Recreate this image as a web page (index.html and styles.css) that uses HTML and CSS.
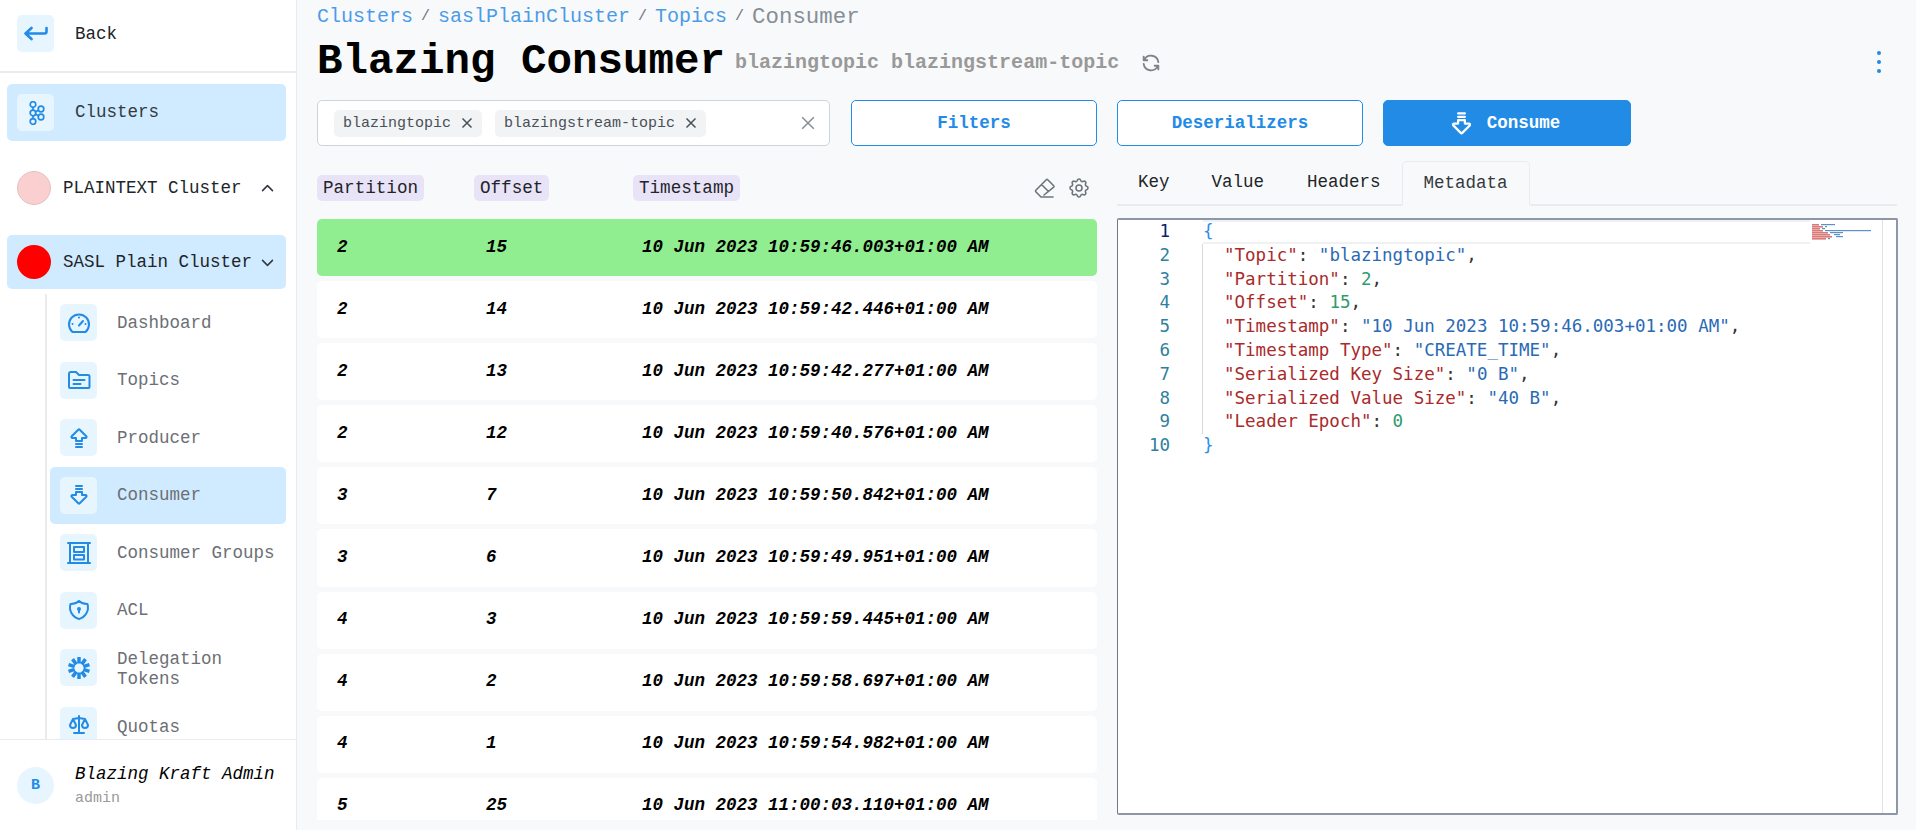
FILE: index.html
```html
<!DOCTYPE html>
<html lang="en">
<head>
<meta charset="utf-8">
<title>Blazing Consumer</title>
<link rel="stylesheet" href="styles.css">
</head>
<body>
<aside class="sidebar">
  <div class="back-row">
    <span class="tile"><svg class="ic ic-back" viewBox="0 0 24 24"><path d="M22.500 7v3.500a2 2 0 0 1-2 2H1.500M7.500 7l-6 5.500 6 5.500"/></svg></span>
    <span class="lbl-dark">Back</span>
  </div>
  <div class="clusters-row">
    <span class="tile"><svg class="ic thin" viewBox="0 0 24 24"><circle cx="9" cy="3.500" r="2.800"/><circle cx="9" cy="12" r="2.800"/><circle cx="9" cy="20.500" r="2.800"/><circle cx="17" cy="8" r="2.800"/><circle cx="17" cy="16" r="2.800"/><path d="M9 6.300v2.900M9 14.800v2.900M11.500 10.800l3-1.500M11.500 13.200l3 1.500"/></svg></span>
    <span class="lbl-dark lbl-up">Clusters</span>
  </div>
  <div class="cluster-row cluster-first">
    <span class="dot dot-pale"></span>
    <span class="cluster-name">PLAINTEXT Cluster</span>
    <svg class="chev" viewBox="0 0 24 24"><path d="M5 15l7-7 7 7"/></svg>
  </div>
  <div class="cluster-row cluster-active">
    <span class="dot dot-red"></span>
    <span class="cluster-name">SASL Plain Cluster</span>
    <svg class="chev" viewBox="0 0 24 24"><path d="M5 9l7 7 7-7"/></svg>
  </div>
  <nav class="nav">
    <div class="nav-item">
      <span class="tile"><svg class="ic" viewBox="0 0 24 24"><path d="M5.500 21h13a10 10 0 1 0-13 0z"/><path d="M12 14.500l4-4.500M5.500 13h.01M12 6.500h.01M18.500 13h.01"/></svg></span>
      <span class="lbl">Dashboard</span>
    </div>
    <div class="nav-item">
      <span class="tile"><svg class="ic" viewBox="0 0 24 24"><path d="M2 6a2 2 0 0 1 2-2h5l3 3h9a1.500 1.500 0 0 1 1.500 1.500V19a1 1 0 0 1-1 1H3a1 1 0 0 1-1-1z"/><path d="M6.500 12h11M6.500 16h7"/></svg></span>
      <span class="lbl">Topics</span>
    </div>
    <div class="nav-item">
      <span class="tile"><svg class="ic" viewBox="0 0 24 24"><path d="M9 12h-3.586a1 1 0 0 1-.707-1.707l6.586-6.586a1 1 0 0 1 1.414 0l6.586 6.586a1 1 0 0 1-.707 1.707h-3.586v3h-6v-3zM9 21h6M9 18h6"/></svg></span>
      <span class="lbl">Producer</span>
    </div>
    <div class="nav-item nav-active">
      <span class="tile"><svg class="ic" viewBox="0 0 24 24"><path d="M15 12h3.586a1 1 0 0 1 .707 1.707l-6.586 6.586a1 1 0 0 1-1.414 0l-6.586-6.586a1 1 0 0 1 .707-1.707h3.586v-3h6v3zM15 3h-6M15 6h-6"/></svg></span>
      <span class="lbl">Consumer</span>
    </div>
    <div class="nav-item">
      <span class="tile"><svg class="ic" viewBox="0 0 24 24"><path d="M1 2h22M3 2v20M21 2v20M1 22h22"/><rect x="7" y="6" width="10" height="5"/><rect x="7" y="14" width="10" height="4.500"/></svg></span>
      <span class="lbl">Consumer Groups</span>
    </div>
    <div class="nav-item">
      <span class="tile"><svg class="ic" viewBox="0 0 24 24"><path d="M12 3a12 12 0 0 0 8.500 3a12 12 0 0 1-8.500 15a12 12 0 0 1-8.500-15a12 12 0 0 0 8.500-3"/><circle cx="12" cy="11" r="1"/><path d="M12 12v2.500"/></svg></span>
      <span class="lbl">ACL</span>
    </div>
    <div class="nav-item">
      <span class="tile"><svg class="ic spokes" viewBox="0 0 24 24"><path d="M12 7.500V1M12 16.500V23M14.650 8.360L18.470 3.100M9.350 15.640L5.530 20.900M9.350 8.360L5.530 3.100M14.650 15.640L18.470 20.900M16.280 10.610L22.460 8.600M7.720 13.390L1.540 15.400M7.720 10.610L1.540 8.600M16.280 13.390L22.460 15.400"/></svg></span>
      <span class="lbl lbl-wrap">Delegation Tokens</span>
    </div>
    <div class="nav-item">
      <span class="tile"><svg class="ic" viewBox="0 0 24 24"><path d="M7 20h10M6 6l6-1 6 1M12 3v17M9 12l-3-6-3 6a3 3 0 0 0 6 0M21 12l-3-6-3 6a3 3 0 0 0 6 0"/></svg></span>
      <span class="lbl lbl-low">Quotas</span>
    </div>
  </nav>
  <div class="user">
    <span class="avatar">B</span>
    <div class="user-text">
      <div class="user-name">Blazing Kraft Admin</div>
      <div class="user-role">admin</div>
    </div>
  </div>
</aside>

<main class="main">
  <div class="crumbs">
    <span class="crumb">Clusters</span><span class="sep">/</span><span class="crumb">saslPlainCluster</span><span class="sep">/</span><span class="crumb">Topics</span><span class="sep">/</span><span class="crumb-cur">Consumer</span>
  </div>
  <div class="title-row">
    <h1 class="title">Blazing Consumer</h1>
    <span class="subtitle">blazingtopic blazingstream-topic</span>
    <svg class="refresh" viewBox="0 0 24 24"><path d="M20 11a8.100 8.100 0 0 0-15.500-2m-.5-4v4h4M4 13a8.100 8.100 0 0 0 15.500 2m.5 4v-4h-4"/></svg>
    <span class="kebab"><i></i><i></i><i></i></span>
  </div>
  <div class="toolbar">
    <div class="select">
      <span class="chip">blazingtopic<svg class="x" viewBox="0 0 12 12"><path d="M1.500 1.500l9 9M10.500 1.500l-9 9"/></svg></span>
      <span class="chip">blazingstream-topic<svg class="x" viewBox="0 0 12 12"><path d="M1.500 1.500l9 9M10.500 1.500l-9 9"/></svg></span>
      <svg class="x-clear" viewBox="0 0 12 12"><path d="M1 1l10 10M11 1L1 11"/></svg>
    </div>
    <div class="buttons">
      <button class="btn">Filters</button>
      <button class="btn">Deserializers</button>
      <button class="btn btn-fill"><svg class="btn-ic" viewBox="0 0 24 24"><path d="M15 12h3.586a1 1 0 0 1 .707 1.707l-6.586 6.586a1 1 0 0 1-1.414 0l-6.586-6.586a1 1 0 0 1 .707-1.707h3.586v-3h6v3zM15 3h-6M15 6h-6"/></svg>Consume</button>
    </div>
  </div>
  <div class="split">
    <section class="left">
      <div class="thead">
        <span class="c1"><b class="pill">Partition</b></span>
        <span class="c2"><b class="pill">Offset</b></span>
        <span class="c3"><b class="pill">Timestamp</b></span>
        <span class="tools">
          <svg class="tool" viewBox="0 0 24 24"><path d="M20 21H8l-5.200-5.300a1 1 0 0 1 0-1.400L13.300 3.700a1 1 0 0 1 1.400 0l6 6a1 1 0 0 1 0 1.400L11 19M8.500 8.500l7 7"/></svg>
          <svg class="tool" viewBox="0 0 24 24"><path d="M10.325 4.317c.426-1.756 2.924-1.756 3.350 0a1.724 1.724 0 0 0 2.573 1.066c1.543-.94 3.310.826 2.370 2.370a1.724 1.724 0 0 0 1.065 2.572c1.756.426 1.756 2.924 0 3.350a1.724 1.724 0 0 0-1.066 2.573c.94 1.543-.826 3.310-2.370 2.370a1.724 1.724 0 0 0-2.572 1.065c-.426 1.756-2.924 1.756-3.350 0a1.724 1.724 0 0 0-2.573-1.066c-1.543.94-3.310-.826-2.370-2.370a1.724 1.724 0 0 0-1.065-2.572c-1.756-.426-1.756-2.924 0-3.350a1.724 1.724 0 0 0 1.066-2.573c-.94-1.543.826-3.310 2.370-2.370 1 .608 2.296.07 2.572-1.065z"/><circle cx="12" cy="12" r="3"/></svg>
        </span>
      </div>
      <div class="rows">
        <div class="row row-sel"><span class="c1">2</span><span class="c2">15</span><span class="c3">10 Jun 2023 10:59:46.003+01:00 AM</span></div>
        <div class="row"><span class="c1">2</span><span class="c2">14</span><span class="c3">10 Jun 2023 10:59:42.446+01:00 AM</span></div>
        <div class="row"><span class="c1">2</span><span class="c2">13</span><span class="c3">10 Jun 2023 10:59:42.277+01:00 AM</span></div>
        <div class="row"><span class="c1">2</span><span class="c2">12</span><span class="c3">10 Jun 2023 10:59:40.576+01:00 AM</span></div>
        <div class="row"><span class="c1">3</span><span class="c2">7</span><span class="c3">10 Jun 2023 10:59:50.842+01:00 AM</span></div>
        <div class="row"><span class="c1">3</span><span class="c2">6</span><span class="c3">10 Jun 2023 10:59:49.951+01:00 AM</span></div>
        <div class="row"><span class="c1">4</span><span class="c2">3</span><span class="c3">10 Jun 2023 10:59:59.445+01:00 AM</span></div>
        <div class="row"><span class="c1">4</span><span class="c2">2</span><span class="c3">10 Jun 2023 10:59:58.697+01:00 AM</span></div>
        <div class="row"><span class="c1">4</span><span class="c2">1</span><span class="c3">10 Jun 2023 10:59:54.982+01:00 AM</span></div>
        <div class="row"><span class="c1">5</span><span class="c2">25</span><span class="c3">10 Jun 2023 11:00:03.110+01:00 AM</span></div>
      </div>
    </section>
    <section class="right">
      <div class="tabs">
        <span class="tab">Key</span><span class="tab">Value</span><span class="tab tab-h">Headers</span><span class="tab tab-on">Metadata</span>
      </div>
      <div class="editor">
        <div class="gutter">
          <div class="ln ln-on">1</div><div class="ln">2</div><div class="ln">3</div><div class="ln">4</div><div class="ln">5</div><div class="ln">6</div><div class="ln">7</div><div class="ln">8</div><div class="ln">9</div><div class="ln">10</div>
        </div>
        <div class="code">
          <div class="cl cl-on"><span class="br">{</span></div>
          <div class="cl guide"><span class="k">"Topic"</span>: <span class="s">"blazingtopic"</span>,</div>
          <div class="cl guide"><span class="k">"Partition"</span>: <span class="n">2</span>,</div>
          <div class="cl guide"><span class="k">"Offset"</span>: <span class="n">15</span>,</div>
          <div class="cl guide"><span class="k">"Timestamp"</span>: <span class="s">"10 Jun 2023 10:59:46.003+01:00 AM"</span>,</div>
          <div class="cl guide"><span class="k">"Timestamp Type"</span>: <span class="s">"CREATE_TIME"</span>,</div>
          <div class="cl guide"><span class="k">"Serialized Key Size"</span>: <span class="s">"0 B"</span>,</div>
          <div class="cl guide"><span class="k">"Serialized Value Size"</span>: <span class="s">"40 B"</span>,</div>
          <div class="cl guide"><span class="k">"Leader Epoch"</span>: <span class="n">0</span></div>
          <div class="cl"><span class="br">}</span></div>
        </div>
        <div class="minimap">
          <svg class="mini" viewBox="0 0 68 24">
            <g class="mk"><rect x="2" y="4" width="7" height="1.600"/><rect x="2" y="6" width="11" height="1.600"/><rect x="2" y="8" width="8" height="1.600"/><rect x="2" y="10" width="11" height="1.600"/><rect x="2" y="12" width="16" height="1.600"/><rect x="2" y="14" width="18" height="1.600"/><rect x="2" y="16" width="20" height="1.600"/><rect x="2" y="18" width="14" height="1.600"/></g>
            <g class="ms"><rect x="11" y="4" width="14" height="1.200"/><rect x="15" y="10" width="46" height="1.200"/><rect x="20" y="12" width="13" height="1.200"/><rect x="24" y="14" width="6" height="1.200"/><rect x="26" y="16" width="7" height="1.200"/></g>
            <rect class="mn" x="15" y="6" width="2" height="1.200"/><rect class="mn" x="12" y="8" width="3" height="1.200"/><rect class="mn" x="18" y="18" width="2" height="1.200"/>
          </svg>
        </div>
      </div>
    </section>
  </div>
</main>
</body>
</html>
```
FILE: styles.css
```css
* { box-sizing: border-box; }
html, body { margin: 0; height: 100%; }
body {
  display: flex;
  height: 100vh;
  overflow: hidden;
  background: #f8f9fa;
  font-family: "Liberation Mono", monospace;
  color: #212529;
}

/* sidebar */
.sidebar {
  flex: 0 0 297px;
  display: flex;
  flex-direction: column;
  height: 100%;
  background: #fff;
  border-right: 1px solid #e9ecef;
}
.tile {
  flex: 0 0 37px;
  width: 37px;
  height: 37px;
  display: flex;
  align-items: center;
  justify-content: center;
  background: #e7f5ff;
  border-radius: 5px;
}
.ic {
  width: 24px;
  height: 24px;
  fill: none;
  stroke: #228be6;
  stroke-width: 2;
  stroke-linecap: round;
  stroke-linejoin: round;
}
.ic-back { stroke-width: 2.600; }
.thin { stroke-width: 1.700; }
.spokes { stroke-width: 3.500; stroke-linecap: butt; }
.back-row {
  flex: 0 0 73px;
  display: flex;
  align-items: center;
  gap: 21px;
  padding: 0 0 5px 17px;
  border-bottom: 2px solid #e9ecef;
}
.lbl-dark { font-size: 17.500px; color: #343a40; }
.lbl-up { padding-bottom: 2px; }
.back-row .lbl-dark { color: #212529; padding-bottom: 0; padding-top: 1px; }
.clusters-row {
  flex: 0 0 57px;
  margin: 11px 10px 0 7px;
  display: flex;
  align-items: center;
  gap: 21px;
  padding-left: 10px;
  background: #d0ebff;
  border-radius: 5px;
}
.cluster-row {
  flex: 0 0 54px;
  display: flex;
  align-items: center;
  margin: 20px 10px 0 7px;
  padding: 0 10px;
  border-radius: 5px;
}
.cluster-active { background: #d0ebff; }
.dot {
  flex: 0 0 34px;
  height: 34px;
  border-radius: 50%;
  margin-right: 12px;
}
.dot-pale { background: #f9cfcf; border: 1px solid #e5c2c2; }
.dot-red { background: #ff0000; }
.cluster-name { flex: 1; font-size: 17.500px; color: #212529; white-space: nowrap; }
.chev {
  flex: 0 0 17px;
  width: 17px;
  height: 17px;
  margin-left: -1px;
  fill: none;
  stroke: #343a40;
  stroke-width: 2.200;
  stroke-linecap: round;
  stroke-linejoin: round;
}

.nav {
  flex: 1;
  min-height: 0;
  overflow: hidden;
  margin: 5px 10px 0 45px;
  padding: 0 0 0 3px;
  border-left: 2px solid #e9ecef;
}
.nav-item {
  height: 57.500px;
  display: flex;
  align-items: center;
  gap: 20px;
  padding-left: 10px;
  border-radius: 5px;
}
.nav-active { background: #d0ebff; }
.lbl { font-size: 17.500px; line-height: 20px; color: #6c6f75; }
.lbl-wrap { width: 130px; padding-top: 2px; }
.lbl-low { padding-top: 4px; }

.user {
  flex: 0 0 91px;
  display: flex;
  align-items: center;
  gap: 21px;
  padding-left: 17px;
  border-top: 1px solid #e9ecef;
}
.avatar {
  flex: 0 0 37px;
  height: 37px;
  display: flex;
  align-items: center;
  justify-content: center;
  border-radius: 50%;
  background: #e7f5ff;
  color: #228be6;
  font-weight: 700;
  font-size: 15px;
}
.user-name { font-size: 17.500px; font-style: italic; color: #000; line-height: 24px; }
.user-role { font-size: 15px; color: #999; margin-top: 4px; line-height: 18px; }

/* main */
.main {
  flex: 1;
  min-width: 0;
  height: 100%;
  display: flex;
  flex-direction: column;
  padding: 0 19px 0 20px;
}
.crumbs {
  flex: 0 0 32px;
  display: flex;
  align-items: center;
  padding-top: 1px;
  font-size: 20px;
  white-space: nowrap;
}
.crumb { color: #4c9be8; }
.crumb-cur { color: #868e96; font-size: 22.400px; }
.sep { color: #6c757d; font-size: 15px; margin: 0 8px; }
.title-row {
  flex: 0 0 60px;
  display: flex;
  align-items: center;
}
.title { margin: 0; font-size: 42.500px; font-weight: 700; color: #000; line-height: 60px; white-space: nowrap; }
.subtitle { margin: 0 0 0 10px; font-size: 20px; font-weight: 700; color: #999; white-space: nowrap; }
.refresh {
  width: 22px;
  height: 22px;
  margin: 2px 0 0 21px;
  fill: none;
  stroke: #7d8389;
  stroke-width: 2;
  stroke-linecap: round;
  stroke-linejoin: round;
}
.kebab {
  margin-left: auto;
  margin-right: 16px;
  display: flex;
  flex-direction: column;
  gap: 4.500px;
}
.kebab i { width: 4.500px; height: 4.500px; border-radius: 50%; background: #228be6; display: block; }

.toolbar {
  flex: 0 0 46px;
  margin-top: 8px;
  display: flex;
  gap: 21px;
}
.select {
  flex: 0 0 513px;
  display: flex;
  align-items: center;
  gap: 13px;
  padding-left: 16px;
  background: #fff;
  border: 1px solid #ced4da;
  border-radius: 5px;
}
.chip {
  height: 27px;
  display: flex;
  align-items: center;
  gap: 10px;
  padding: 0 9px;
  background: #f1f3f5;
  border-radius: 5px;
  font-size: 15px;
  color: #495057;
}
.x {
  width: 12px;
  height: 12px;
  fill: none;
  stroke: #495057;
  stroke-width: 1.500;
}
.x-clear {
  width: 14px;
  height: 14px;
  margin-left: auto;
  margin-right: 14px;
  fill: none;
  stroke: #868e96;
  stroke-width: 1.300;
}
.buttons {
  display: flex;
  gap: 20px;
}
.btn {
  width: 246px;
  height: 46px;
  display: flex;
  align-items: center;
  justify-content: center;
  gap: 12px;
  background: #fff;
  border: 1px solid #228be6;
  border-radius: 5px;
  color: #228be6;
  font: 700 17.500px "Liberation Mono", monospace;
  padding: 0;
}
.btn-fill { background: #228be6; color: #fff; width: 248px; padding-right: 6px; }
.btn-ic {
  width: 27px;
  height: 27px;
  fill: none;
  stroke: #fff;
  stroke-width: 2;
  stroke-linecap: round;
  stroke-linejoin: round;
}

.split {
  flex: 1;
  min-height: 0;
  display: grid;
  grid-template-columns: 780px 780px;
  gap: 20px;
  margin-top: 14px;
}
.left { display: flex; flex-direction: column; min-height: 0; }
.thead {
  flex: 0 0 59px;
  display: flex;
  align-items: flex-start;
  padding-top: 15px;
}
.thead .c1 { width: 157px; }
.thead .c2 { width: 159px; }
.thead .c3 { flex: 1; }
.pill {
  display: inline-block;
  height: 26px;
  line-height: 26px;
  padding: 0 6px;
  background: #e9e3f8;
  border-radius: 5px;
  font-weight: 400;
  font-size: 17.600px;
  color: #212529;
}
.tools {
  display: flex;
  gap: 10px;
  margin-right: 6px;
  padding-top: 1px;
}
.tool {
  width: 24px;
  height: 24px;
  fill: none;
  stroke: #6c757d;
  stroke-width: 1.600;
  stroke-linecap: round;
  stroke-linejoin: round;
}
.rows {
  height: 601px;
  overflow: hidden;
  display: flex;
  flex-direction: column;
  gap: 5px;
}
.row {
  flex: 0 0 57.100px;
  display: flex;
  align-items: center;
  padding: 0 0 2px 20px;
  background: #fff;
  border-radius: 5px;
  font-size: 17.500px;
  font-weight: 700;
  font-style: italic;
  color: #000;
}
.row-sel { background: #90ee90; }
.row .c1 { width: 149px; }
.row .c2 { width: 156px; }

.right { display: flex; flex-direction: column; min-height: 0; }
.tabs {
  flex: 0 0 45px;
  display: flex;
  align-items: flex-end;
  border-bottom: 2px solid #e9ecef;
}
.tab {
  height: 44px;
  display: flex;
  align-items: center;
  padding: 0 21px;
  font-size: 17.500px;
  color: #212529;
}
.tab-h { margin-left: 1px; }
.tab-on {
  border: 1px solid #e9ecef;
  border-bottom: 2px solid #f8f9fa;
  border-radius: 5px 5px 0 0;
  height: 45px;
  margin-bottom: -2px;
  color: #343a40;
}
.editor {
  width: 781px;
  height: 597px;
  margin-top: 12px;
  display: flex;
  background: #fff;
  border-top: 2px solid #8e97a8;
  border-left: 1px solid #6f7786;
  border-right: 2px solid #8e97a8;
  border-bottom: 2px solid #8e97a8;
  border-radius: 2px;
  font-family: "DejaVu Sans Mono", monospace;
  font-size: 17.500px;
  line-height: 23.800px;
}
.gutter { flex: 0 0 52px; text-align: right; color: #2f7f9e; }
.ln-on { color: #0b216f; }
.code { flex: 0 0 607px; margin-left: 33px; color: #333; }
.cl { height: 23.800px; white-space: pre; }
.cl-on { border-top: 2px solid #eff1f3; border-bottom: 2px solid #eff1f3; line-height: 19.800px; }
.guide { padding-left: 21px; border-left: 1px solid #d9d9d9; margin-left: -1px; }
.k { color: #a92b2b; }
.s { color: #2a6ab5; }
.n { color: #2f9a6d; }
.br { color: #2b8fe8; }
.minimap {
  flex: 1;
  margin-right: 13px;
  border-right: 1px solid #dfe1e5;
}
.mini { display: block; width: 68px; height: 24px; filter: blur(.4px); }
.mk { fill: #d97a7a; }
.ms { fill: #5f8fca; }
.mn { fill: #4aa57f; }
```
